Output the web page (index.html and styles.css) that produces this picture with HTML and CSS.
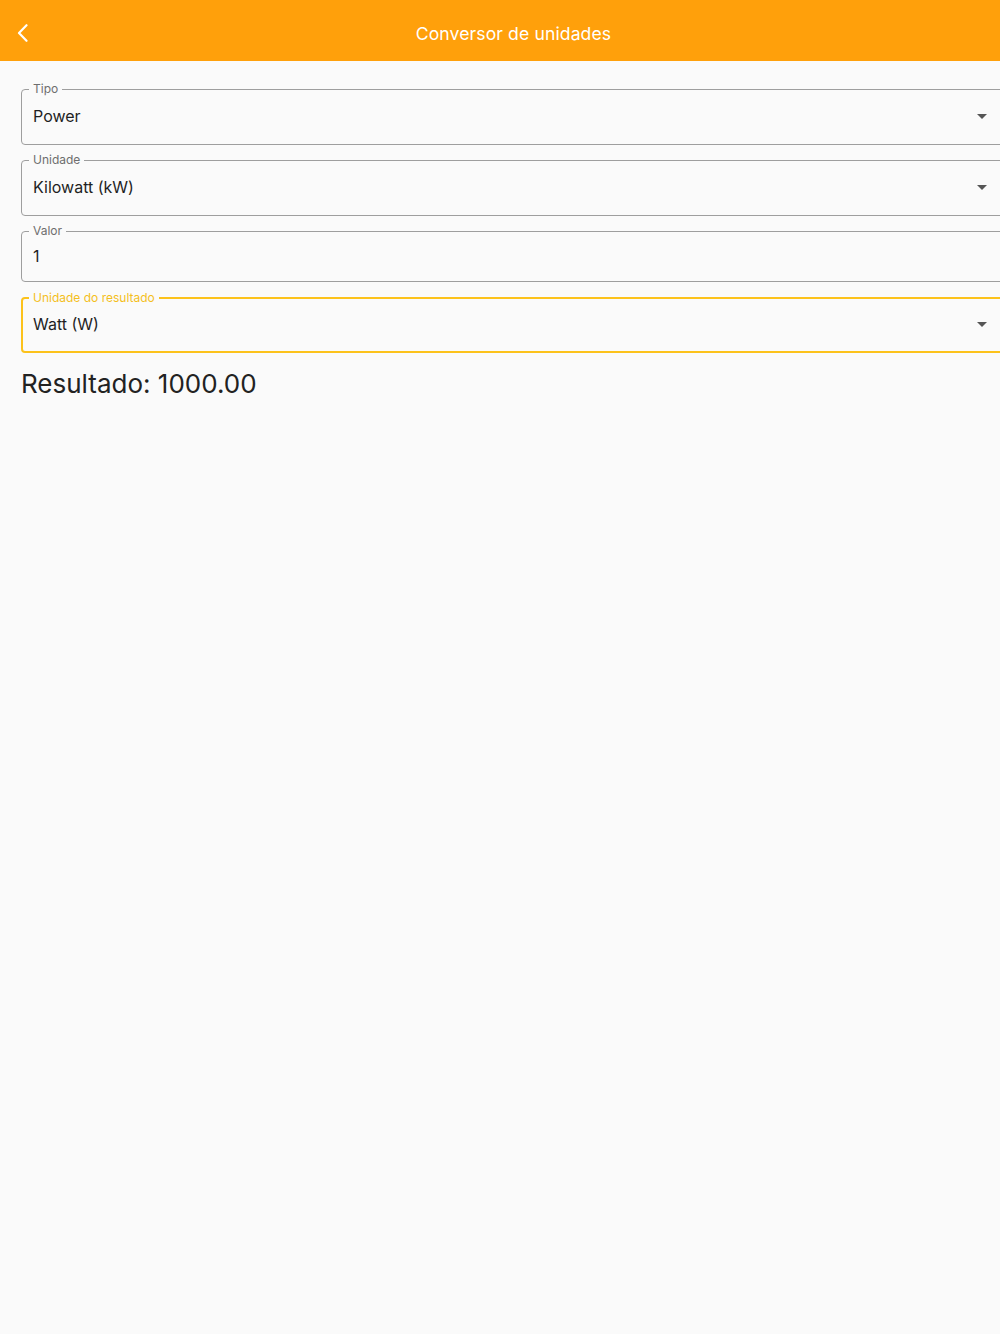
FILE: index.html
```html
<!DOCTYPE html>
<html lang="pt">
  <head>
    <meta charset="UTF-8" />
    <meta name="viewport" content="width=device-width, initial-scale=1.0" />
    <title>Conversor de unidades</title>
    <link rel="stylesheet" href="styles.css">
  </head>
  <body>
    <header class="app-bar">
      <button class="back" aria-label="Voltar">
        <svg width="14" height="18" viewBox="0 0 14 18">
          <path d="M11.5 1.2 L4 9 L11.5 16.8" fill="none" stroke="#fff" stroke-width="2.2" stroke-linecap="round" stroke-linejoin="round"/>
        </svg>
      </button>
      <h1>Conversor de unidades</h1>
    </header>

    <main class="content">
      <div class="field">
        <span class="label">Tipo</span>
        <span class="value">Power</span>
        <span class="arrow"></span>
      </div>

      <div class="field">
        <span class="label">Unidade</span>
        <span class="value">Kilowatt (kW)</span>
        <span class="arrow"></span>
      </div>

      <div class="field field-input">
        <span class="label">Valor</span>
        <span class="value">1</span>
      </div>

      <div class="field focused">
        <span class="label">Unidade do resultado</span>
        <span class="value">Watt (W)</span>
        <span class="arrow"></span>
      </div>

      <p class="result">Resultado: 1000.00</p>
    </main>
  </body>
</html>
```

FILE: styles.css
```css
body {
  margin: 0;
  background-color: #fafafa;
  font-family: Inter, "Noto Sans", sans-serif;
  color: #1f1f1f;
  overflow: hidden;
  height: 1334px;
}
.app-bar {
  height: 61px;
  box-sizing: border-box;
  padding-top: 5px;
  background-color: #ffa00b;
  display: flex;
  align-items: center;
  justify-content: center;
  position: relative;
}
.app-bar h1 {
  margin: 0 0 0 27px;
  font-size: 17.6px;
  font-weight: 400;
  color: #fff;
  letter-spacing: 0.1px;
}
.back {
  position: absolute;
  left: 15px;
  top: 24px;
  padding: 0;
  background: none;
  border: none;
  display: flex;
}
.content {
  padding: 28px 0 0 21px;
  display: flex;
  flex-direction: column;
  gap: 15px;
}
.field {
  position: relative;
  width: 985px;
  height: 56px;
  box-sizing: border-box;
  border: 1px solid #9e9e9e;
  border-radius: 4px;
  display: flex;
  align-items: center;
  padding: 0 12px 3px 11px;
}
.field-input {
  height: 51px;
  align-items: flex-start;
  padding-top: 14px;
}
.label {
  position: absolute;
  left: 7px;
  top: -8px;
  padding: 0 4px;
  background-color: #fafafa;
  font-size: 12px;
  line-height: 14px;
  color: #6e6e6e;
}
.value {
  font-size: 16px;
  flex: 1;
}
.arrow {
  width: 0;
  height: 0;
  margin: 1px 6px 0 0;
  border-left: 5px solid transparent;
  border-right: 5px solid transparent;
  border-top: 5px solid #555;
}
.focused {
  border: 2px solid #fcc21b;
  padding-left: 10px;
}
.focused .label {
  color: #f4bf1d;
  left: 6px;
}
.focused .arrow {
  margin-right: 5px;
}
.result {
  margin: 0;
  font-size: 26px;
  font-weight: 400;
  color: #222;
}
```
